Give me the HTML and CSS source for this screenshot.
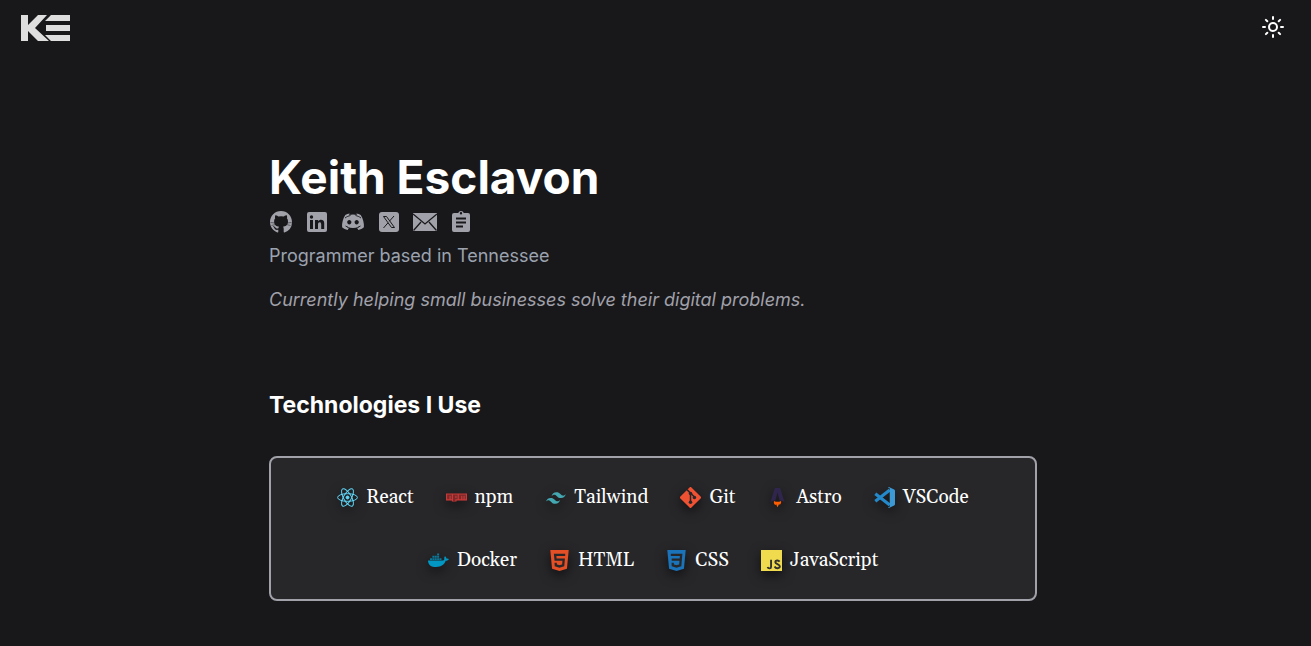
FILE: index.html
```html
<!DOCTYPE html>
<html lang="en">
<head>
<meta charset="utf-8">
<meta name="viewport" content="width=device-width, initial-scale=1">
<title>Keith Esclavon</title>
<link rel="stylesheet" href="styles.css">
</head>
<body>
<header class="topbar">
  <a class="brand" href="#" aria-label="Home">
    <svg width="49" height="26" viewBox="0 0 49 26" fill="#dedede"><path d="M0 0h7v10L17 0h9L14 13l14 13H17L7 16v10H0zM30 0h19v6H24zM25 10h24v6H25zM24 20h25v6H30z"/></svg>
  </a>
  <button class="theme" type="button" aria-label="Toggle theme">
    <svg width="24" height="24" viewBox="0 0 24 24" fill="none" stroke="#fff" stroke-width="2"><circle cx="12" cy="12" r="4"/><path stroke-linecap="round" d="M12 2v2M12 20v2M2 12h2M20 12h2M4.900 4.900l1.400 1.400M17.700 17.700l1.400 1.400M4.900 19.100l1.400-1.400M17.700 6.300l1.400-1.400"/></svg>
  </button>
</header>
<main class="page">
  <section class="intro">
    <h1 class="name">Keith Esclavon</h1>
    <nav class="social" aria-label="Profiles">
      <a href="#" aria-label="GitHub"><svg viewBox="0 0 24 24"><path d="M12 1C5.900 1 1 5.900 1 12c0 4.900 3.100 9 7.500 10.400.6.1.8-.2.8-.5v-2.100c-3.100.7-3.700-1.300-3.700-1.300-.5-1.300-1.200-1.600-1.200-1.600-1-.7.1-.7.1-.7 1.100.1 1.700 1.100 1.700 1.100 1 1.700 2.600 1.200 3.200.9.1-.7.4-1.200.7-1.500-2.400-.3-5-1.200-5-5.400 0-1.200.4-2.200 1.100-3-.1-.3-.5-1.400.1-2.900 0 0 .9-.3 3 1.100a10.500 10.500 0 0 1 5.500 0c2.100-1.400 3-1.100 3-1.100.6 1.500.2 2.600.1 2.900.7.8 1.100 1.800 1.100 3 0 4.200-2.600 5.100-5 5.400.4.3.7 1 .7 2v3.200c0 .3.2.6.8.5A11 11 0 0 0 23 12C23 5.900 18.100 1 12 1z" class="flip"/><path d="m1.500 12.500 4.500.5M22.500 12.500 18 13M2.500 15.500l4-1M21.500 15.500l-4-1" stroke="#18181b" stroke-width=".5"/></svg></a>
      <a href="#" aria-label="LinkedIn"><svg viewBox="0 0 24 24"><path fill-rule="evenodd" d="M4 2h16a2 2 0 0 1 2 2v16a2 2 0 0 1-2 2H4a2 2 0 0 1-2-2V4a2 2 0 0 1 2-2zm1 8v9h3v-9zm1.500-4.700a1.700 1.700 0 1 0 0 3.400 1.700 1.700 0 0 0 0-3.400zM10 10v9h3v-4.700c0-2.600 3.200-2.800 3.200 0V19h3v-5.700c0-4.300-4.500-4.100-6.200-2V10z"/></svg></a>
      <a href="#" aria-label="Discord"><svg viewBox="0 0 24 24"><path fill-rule="evenodd" d="M8.700 3.500 8 5A17 17 0 0 1 16 5l-.7-1.500c1.700.2 3.200.7 4.400 1.400C22 8.400 23.300 13 22.900 17.300c-1.700 1.400-3.500 2.200-5.500 2.700l-1.200-1.900 1.900-1-.5-.4c-3.600 1.600-7.600 1.600-11.200 0l-.5.4 1.900 1L6.600 20c-2-.5-3.800-1.300-5.500-2.700C.7 13 2 8.400 4.300 4.900c1.200-.7 2.700-1.200 4.400-1.400zM8.300 10c-1.200 0-2.100 1-2.100 2.200s.9 2.200 2.100 2.200 2.100-1 2.100-2.200-.9-2.200-2.100-2.200zm7.400 0c-1.200 0-2.100 1-2.100 2.200s.9 2.200 2.100 2.200 2.100-1 2.100-2.200-.9-2.200-2.100-2.200z"/><path d="M4 8c2-1.500 3.500-2 5.500-2.500M20 8c-2-1.500-3.500-2-5.500-2.500M4.500 16l2.500 1.300M19.500 16 17 17.300" fill="none" stroke="#18181b" stroke-width=".9"/></svg></a>
      <a href="#" aria-label="X"><svg viewBox="0 0 24 24"><rect x="2" y="2" width="20" height="20" rx="3"/><path d="M6.500 6.500h3l8 11h-3zM17 6l-4.700 5.300M11 12.800 6.500 18" fill="none" stroke="#18181b" stroke-width="1"/></svg></a>
      <a href="#" aria-label="Email"><svg viewBox="0 0 24 24"><path d="M0 3h24v18H0z"/><path d="m0 4 12 10L24 4M.5 20.500 8 12M23.500 20.500 16 12" fill="none" stroke="#18181b" stroke-width="1.300"/></svg></a>
      <a href="#" aria-label="Resume"><svg viewBox="0 0 24 24"><path fill-rule="evenodd" d="M5 3h4.200a3 3 0 0 1 5.600 0H19a2 2 0 0 1 2 2v15a2 2 0 0 1-2 2H5a2 2 0 0 1-2-2V5a2 2 0 0 1 2-2zm7-1a1.200 1.200 0 1 0 0 2.400A1.200 1.200 0 0 0 12 2zM7 7.500v2h10v-2zm0 4v2h10v-2zm0 4v2h7v-2z"/></svg></a>
    </nav>
    <p class="role">Programmer based in Tennessee</p>
    <p class="status">Currently helping small businesses solve their digital problems.</p>
  </section>
  <section>
    <h2 class="section-title">Technologies I Use</h2>
    <ul class="tech">
      <li><svg viewBox="0 0 24 24" fill="none" stroke="#61dafb" stroke-width="1.100"><circle cx="12" cy="12" r="1.700" fill="#61dafb"/><ellipse cx="12" cy="12" rx="11.300" ry="4.400"/><ellipse cx="12" cy="12" rx="11.300" ry="4.400" transform="rotate(60 12 12)"/><ellipse cx="12" cy="12" rx="11.300" ry="4.400" transform="rotate(120 12 12)"/></svg>React</li>
      <li><svg viewBox="0 0 24 24"><path fill="#7a2a2a" d="M1 8h22v7H1z"/><path fill="#cb3837" d="M0 7.334v8h6.666v1.332H12v-1.332h12v-8H0zm6.666 6.664H5.334v-4H3.999v4H1.335V8.667h5.331v5.331zm4 0v1.336H8.001V8.667h5.334v5.332h-2.669v-.001zm12.001 0h-1.330v-4h-1.336v4h-1.335v-4h-1.330v4h-2.671V8.667h8.002v5.331zM10.665 10H12v2.667h-1.335V10z"/></svg>npm</li>
      <li><svg viewBox="0 0 24 24"><path fill="#44a8b3" d="M7.500 10.500C8.300 7.500 10.100 6 13 6c4.300 0 4.800 3.200 7 3.800 1.400.3 2.700-.2 3.800-1.700-.8 3-2.600 4.500-5.500 4.500-4.300 0-4.800-3.200-7-3.800-1.400-.3-2.700.2-3.800 1.700zM1 17c.8-3 2.600-4.500 5.500-4.500 4.300 0 4.800 3.200 7 3.800 1.400.3 2.700-.2 3.800-1.700-.8 3-2.600 4.500-5.500 4.500-4.300 0-4.800-3.200-7-3.800-1.400-.3-2.700.2-3.800 1.700z"/></svg>Tailwind</li>
      <li><svg viewBox="0 0 24 24"><path fill="#f05133" d="M10.900.5a1.500 1.500 0 0 1 2.200 0l10.400 10.400a1.500 1.500 0 0 1 0 2.200L13.100 23.500a1.500 1.500 0 0 1-2.200 0L.5 13.100a1.500 1.500 0 0 1 0-2.200z"/><path d="m8 3 8.500 8.500M12 7v10" stroke="#272729" stroke-width="1.700"/><g fill="#272729"><circle cx="12" cy="7.500" r="2"/><circle cx="12" cy="17.300" r="2"/><circle cx="16.500" cy="12" r="2"/></g></svg>Git</li>
      <li><svg viewBox="0 0 24 24"><path fill="#30264d" d="M9 1h6l5 16c-2-1-4-1.400-5.500-1.500L12 6 9.500 15.500C8 15.600 6 16 4 17z"/><path fill="#ff5d01" d="M8 16c2.500 1.300 5.500 1.300 8 0 .6 2-.2 3.500-1.800 4.400l-.4-1L12 23l-1.600-3.300-.5 1C8.200 19.800 7.400 18 8 16z"/></svg>Astro</li>
      <li><svg viewBox="0 0 24 24"><path fill="none" stroke="#2489ca" stroke-width="3.600" d="M1.500 7.700 18 20.500M1.500 16.300 18 3.500"/><path fill="#3c99d4" d="m17 0 6 2.800c.6.300 1 .8 1 1.500v15.400c0 .7-.4 1.200-1 1.500L17 24l-1-1 2-.5v-21L16 1z"/></svg>VSCode</li>
      <li><svg viewBox="0 0 24 24" fill="#0296c2"><path d="M0 12h17c1.500 0 2-1.200 1.500-3.200.3-1 .6-1.500 1-1.800 1 .7 1.500 1.700 1.500 2.800 1-.2 2.200 0 3 .6-.8 1.500-2 2-3.800 2C18.500 17 15 19.500 9.500 19.500 3.500 19.500 0 17 0 12z"/><path d="M2.300 9.300h2.300v2.200H2.300zm2.700 0h2.300v2.200H5zm2.700 0H10v2.200H7.700zm2.700 0h2.300v2.200h-2.300zm2.700 0h2.300v2.200h-2.300zM5 6.600h2.300v2.200H5zm2.700 0H10v2.200H7.700zm2.700 0h2.300v2.200h-2.300zm0-2.700h2.300v2.200h-2.300z" opacity=".75"/></svg>Docker</li>
      <li><svg viewBox="0 0 24 24"><path fill="#e44f26" d="M1.500 0h21l-2 21.500L12 24l-8.500-2.500z"/><path fill="none" stroke="#272729" stroke-width="2.600" d="M18.500 5.500H7l.5 5.400h9.300l-.6 6.700-4.200 1.200-4.200-1.200-.2-3"/></svg>HTML</li>
      <li><svg viewBox="0 0 24 24"><path fill="#1b73ba" d="M1.500 0h21l-2 21.500L12 24l-8.500-2.500z"/><path fill="none" stroke="#272729" stroke-width="2.600" d="M5.500 5.500h11.800l-1 12.100-4.300 1.200-4.200-1.200-.2-3M6.500 10.900h10"/></svg>CSS</li>
      <li><svg viewBox="0 0 24 24"><path fill="#f0db4f" d="M0 0h24v24H0z"/><path fill="none" stroke="#323330" stroke-width="2.200" d="M11.500 11v8c0 2.500-3.200 2.600-4 .4M21.300 13.200c-1.500-2-5-1.500-5 .6 0 2.700 5.200 1.900 5.200 4.900 0 2.700-4.500 3-6 .2"/></svg>JavaScript</li>
    </ul>
  </section>
</main>
</body>
</html>
```
FILE: styles.css
```css
* { box-sizing: border-box; }

body {
  margin: 0;
  background: #18181b;
  color: #fff;
  font-family: Inter, "Liberation Sans", sans-serif;
}

svg { display: block; }

.topbar {
  display: flex;
  align-items: flex-start;
  justify-content: space-between;
  padding: 15px 26px 12px 21px;
}

.theme {
  padding: 0;
  border: 0;
  background: none;
}

.page {
  max-width: 773px;
  margin: 0 auto;
  padding: 100px 5px 40px 0;
}

.name {
  margin: 0;
  font-size: 46px;
  line-height: 48px;
  font-weight: 700;
}

.social {
  display: flex;
  gap: 12px;
  margin-top: 9px;
}

.social svg {
  width: 24px;
  height: 24px;
  fill: #a1a1aa;
}

.role,
.status {
  margin: 0;
  font-size: 18px;
  line-height: 28px;
  color: #a1a1aa;
}

.role { margin-top: 8px; color: #9ca3af; }

.status { margin-top: 16px; font-style: italic; }

.section-title {
  margin: 75px 0 35px;
  font-size: 23px;
  line-height: 32px;
  font-weight: 700;
}

.tech {
  display: flex;
  flex-wrap: wrap;
  justify-content: center;
  gap: 35px 32px;
  margin: 0;
  padding: 25px 48px;
  list-style: none;
  border: 2px solid #a1a1aa;
  border-radius: 8px;
  background: #27272a;
  font-family: Gelasio, Georgia, "Liberation Serif", serif;
  font-size: 19px;
  line-height: 28px;
}

.tech li {
  display: flex;
  align-items: center;
  gap: 8px;
}

.tech svg {
  width: 21px;
  height: 21px;
  filter: drop-shadow(0 4px 6px rgb(0 0 0 / 60%));
}
```
